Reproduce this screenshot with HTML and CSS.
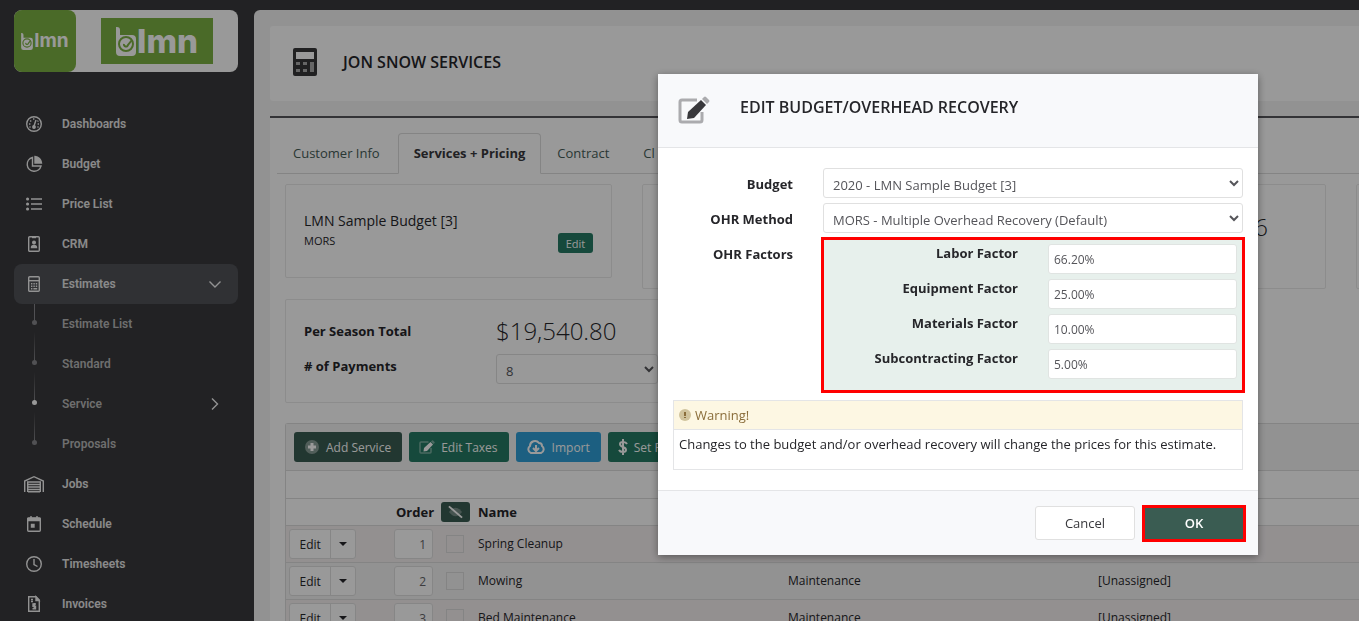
FILE: index.html
```html
<!DOCTYPE html>
<html lang="en">
<head>
  <meta charset="UTF-8">
  <meta name="viewport" content="width=device-width, initial-scale=1.0">
  <title>Jon Snow Services - LMN</title>
  <link rel="stylesheet" href="styles.css">
</head>
<body>

  <svg class="defs" aria-hidden="true">
    <symbol id="logo-mark" viewBox="0 0 20 29">
      <path d="M0 0h1q3 0 3 3v5h12a4 4 0 0 1 4 4v13a4 4 0 0 1-4 4H4a4 4 0 0 1-4-4Z" fill="#fff"/>
      <circle cx="10" cy="17" r="7" fill="none" stroke="#7cb143" stroke-width="2"/>
      <path d="M8 17a2 2 0 1 0 4 1l4-5" fill="none" stroke="#7cb143" stroke-width="2"/>
    </symbol>
    <symbol id="pencil-square" viewBox="0 0 32 28">
      <path d="M19 4H4a2 2 0 0 0-2 2v18a2 2 0 0 0 2 2h18a2 2 0 0 0 2-2v-8" fill="none" stroke="currentColor" stroke-width="3" opacity=".4"/>
      <path d="m10 16-1 7 7-1L28 9l-5-5Z" fill="currentColor"/>
      <path d="m24 3 2-2q1-1 2 0l3 3q1 1 0 2l-2 2Z" fill="currentColor" opacity=".4"/>
    </symbol>
  </svg>

  <div class="app">
    <aside class="sidebar">
      <div class="brand">
        <div class="brand-small">
          <svg><use href="#logo-mark"/></svg><span>lmn</span>
        </div>
        <div class="brand-large">
          <svg><use href="#logo-mark"/></svg><span>lmn</span>
        </div>
      </div>

      <nav class="menu">
        <a href="#"><svg class="icon" viewBox="0 0 20 20"><circle cx="10" cy="10" r="7.3"/><path d="m10 12 2-6"/><circle class="solid" cx="10" cy="13" r="1.2"/><path d="M5 10h1.4M6.2 6.5l1 1M9 5h1.4M13.6 10H15M13.5 7.5l.8-.8M5.4 13h1.2M13.4 13h1.2"/></svg>Dashboards</a>
        <a href="#"><svg class="icon" viewBox="0 0 20 20"><path d="M8.500 3.500a7 7 0 1 0 8.500 8.500h-8.500Z"/><path class="solid" d="M11 2.500a7 7 0 0 1 6.500 6.500H11Z"/></svg>Budget</a>
        <a href="#"><svg class="icon" viewBox="0 0 20 20"><path d="M7 5h11M7 10h11M7 15h11"/><path class="dots" d="M3.500 5h.1M3.500 10h.1M3.500 15h.1"/></svg>Price List</a>
        <a href="#"><svg class="icon" viewBox="0 0 20 20"><rect x="4.700" y="2.700" width="10.600" height="14.600" rx="1"/><path d="M8 3.500h4"/><circle class="solid" cx="10" cy="8.500" r="1.300"/><path class="solid" d="M7.500 13.500q0-2 2.500-2t2.500 2Z"/></svg>CRM</a>
        <a href="#" class="active"><svg class="icon" viewBox="0 0 20 20"><rect x="4.700" y="2.700" width="10.600" height="14.600" rx="1"/><path d="M5 6.700h10"/><path d="M7 9.700h1.400M9.400 9.700h1.400M11.800 9.700h1.400M7 12.200h1.400M9.400 12.200h1.400M11.800 12.200h1.400M7 14.700h1.400M9.400 14.700h3.800"/></svg>Estimates<svg class="caret" viewBox="0 0 14 14"><path d="m1.500 4.500 5.500 5.500 5.500-5.500"/></svg></a>
        <a href="#" class="sub first">Estimate List</a>
        <a href="#" class="sub">Standard</a>
        <a href="#" class="sub current">Service<svg class="caret" viewBox="0 0 14 14"><path d="m4 1.500 5.500 5.500-5.500 5.500"/></svg></a>
        <a href="#" class="sub">Proposals</a>
        <a href="#"><svg class="icon" viewBox="0 0 20 20"><path d="M.7 18V7L10 2.700 19.300 7v11"/><path d="M3.700 18V8h12.600v10M4 10.500h12M4 13h12M4 15.500h12M4 17.700h12"/></svg>Jobs</a>
        <a href="#"><svg class="icon" viewBox="0 0 20 20"><rect x="3.700" y="4" width="12.600" height="13.300" rx="1"/><path class="solid" d="M4 4.500h12v2H4ZM7.500 10.500h2.500V13H7.500Z"/><path d="M7 2v2M13 2v2"/></svg>Schedule</a>
        <a href="#"><svg class="icon" viewBox="0 0 20 20"><circle cx="10" cy="10" r="7.300"/><path d="M10 5v5.500l3.500 2"/></svg>Timesheets</a>
        <a href="#"><svg class="icon" viewBox="0 0 20 20"><path d="M4.700 2.700H12l3.300 3.300v11.300H4.700Z"/><path class="solid" d="M12 3v3.500h3Z"/><path d="M7 5.500h2M7 7.500h2M12 10H9v2.300h2.500v2.400H8.500M10.300 9v6.500"/></svg>Invoices</a>
      </nav>
    </aside>

    <main class="content">
      <header class="page-head">
        <svg viewBox="0 0 26 30"><rect x="1" y="1" width="24" height="28" rx="2" fill="#38383a"/><path d="M4 5h18v7H4Z" fill="#fff"/><path d="M4 15h4v3H4ZM11 15h4v3h-4ZM18 15h4v10h-4ZM4 22h4v3H4ZM11 22h4v3h-4Z" fill="#aaa"/></svg>
        <h1>JON SNOW SERVICES</h1>
      </header>

      <section class="panel">
        <nav class="tabs">
          <a href="#">Customer Info</a>
          <a href="#" class="active">Services + Pricing</a>
          <a href="#">Contract</a>
          <a href="#">Cl</a>
        </nav>

        <div class="cards">
          <div class="card budget">
            <div>
              <h2>LMN Sample Budget [3]</h2>
              <p>MORS</p>
            </div>
            <button class="btn-small">Edit</button>
          </div>
          <div class="card"></div>
          <div class="card amount">6</div>
          <div class="card"></div>
        </div>

        <div class="card season">
          <span class="season-label">Per Season Total</span>
          <span class="total">$19,540.80</span>
          <label class="season-label" for="payments"># of Payments</label>
          <select id="payments"><option>8</option></select>
        </div>

        <div class="services">
          <div class="toolbar">
            <button class="btn dark"><svg viewBox="0 0 16 16"><circle cx="8" cy="8" r="7" fill="#fff" opacity=".4"/><path d="M8 4v8M4 8h8" stroke="#fff" stroke-width="3"/></svg>Add Service</button>
            <button class="btn green"><svg viewBox="0 0 32 28"><use href="#pencil-square"/></svg>Edit Taxes</button>
            <button class="btn blue"><svg class="wide" viewBox="0 0 20 16"><path d="M5 14a4 4 0 0 1-1-7 5 5 0 0 1 9-3q3 0 3 3a4 4 0 0 1-1 7ZM10 6v5M7 9l3 3 3-3" fill="none" stroke="#fff" stroke-width="2"/></svg>Import</button>
            <button class="btn green"><svg class="narrow" viewBox="0 0 10 16"><path d="M9 5q-1-2-4-2T2 5t3 3 3 3-3 2-4-2M5 0v16" fill="none" stroke="#fff" stroke-width="2"/></svg>Set P</button>
          </div>
          <table>
            <colgroup>
              <col class="col-edit">
              <col class="col-order">
              <col class="col-check">
              <col class="col-name">
              <col class="col-name">
              <col>
            </colgroup>
            <thead>
              <tr class="spacer"><td colspan="6"></td></tr>
              <tr>
                <th></th>
                <th class="order-head">Order</th>
                <th><button class="eye" aria-label="Hide"><svg viewBox="0 0 16 14"><path d="M1 7q7-9 14 0-7 9-14 0Z" fill="#fff" opacity=".3"/><path d="m1 1 14 12" stroke="#fff" stroke-width="2"/></svg></button></th>
                <th>Name</th>
                <th></th>
                <th></th>
              </tr>
            </thead>
            <tbody>
              <tr>
                <td><div class="split"><button>Edit</button><button class="drop" aria-label="More"></button></div></td>
                <td class="order"><input type="text" value="1" aria-label="Order"></td>
                <td class="check"><input type="checkbox" aria-label="Hide Spring Cleanup"></td>
                <td>Spring Cleanup</td>
                <td></td>
                <td></td>
              </tr>
              <tr>
                <td><div class="split"><button>Edit</button><button class="drop" aria-label="More"></button></div></td>
                <td class="order"><input type="text" value="2" aria-label="Order"></td>
                <td class="check"><input type="checkbox" aria-label="Hide Mowing"></td>
                <td>Mowing</td>
                <td>Maintenance</td>
                <td>[Unassigned]</td>
              </tr>
              <tr>
                <td><div class="split"><button>Edit</button><button class="drop" aria-label="More"></button></div></td>
                <td class="order"><input type="text" value="3" aria-label="Order"></td>
                <td class="check"><input type="checkbox" aria-label="Hide Bed Maintenance"></td>
                <td>Bed Maintenance</td>
                <td>Maintenance</td>
                <td>[Unassigned]</td>
              </tr>
            </tbody>
          </table>
        </div>
      </section>
    </main>
  </div>

  <div class="overlay">
    <form class="modal" role="dialog" aria-labelledby="modal-title">
      <header class="modal-head">
        <svg><use href="#pencil-square"/></svg>
        <h2 id="modal-title">EDIT BUDGET/OVERHEAD RECOVERY</h2>
      </header>
      <div class="modal-body">
        <div class="field">
          <label for="budget">Budget</label>
          <select id="budget"><option>2020 - LMN Sample Budget [3]</option></select>
        </div>
        <div class="field">
          <label for="method">OHR Method</label>
          <select id="method"><option>MORS - Multiple Overhead Recovery (Default)</option></select>
        </div>
        <div class="field">
          <span class="field-label">OHR Factors</span>
          <div class="factors">
            <label for="labor">Labor Factor</label>
            <input type="text" id="labor" value="66.20%">
            <label for="equipment">Equipment Factor</label>
            <input type="text" id="equipment" value="25.00%">
            <label for="materials">Materials Factor</label>
            <input type="text" id="materials" value="10.00%">
            <label for="subcontracting">Subcontracting Factor</label>
            <input type="text" id="subcontracting" value="5.00%">
          </div>
        </div>
        <div class="warning">
          <h3><svg viewBox="0 0 12 12"><circle cx="6" cy="6" r="6" fill="#d0c39d"/><path d="M6 3v4M6 8v1" stroke="#8a6d3b" stroke-width="2"/></svg>Warning!</h3>
          <p>Changes to the budget and/or overhead recovery will change the prices for this estimate.</p>
        </div>
      </div>
      <footer class="modal-foot">
        <button type="button" class="cancel">Cancel</button>
        <button type="button" class="ok">OK</button>
      </footer>
    </form>
  </div>

</body>
</html>
```

FILE: styles.css
```css
* { box-sizing: border-box; }

body {
  margin: 0;
  height: 100vh;
  overflow: hidden;
  font-family: "Open Sans", sans-serif;
  font-size: 13px;
  line-height: 20px;
  color: #26262a;
  background: #3a3a3d;
}

h1, h2, h3, p { margin: 0; }

a { text-decoration: none; }

button, input, select {
  font-family: inherit;
  font-size: 13px;
}

.defs {
  position: absolute;
  width: 0;
  height: 0;
}

.app {
  display: flex;
  height: 100vh;
  overflow: hidden;
}

/* Sidebar */

.sidebar {
  flex: 0 0 254px;
  padding: 10px 16px 0 14px;
}

.brand {
  display: flex;
  height: 62px;
  margin-bottom: 32px;
  background: #fff;
  border-radius: 8px;
}

.brand-small, .brand-large {
  display: flex;
  align-items: center;
  justify-content: center;
  gap: 1px;
  background: #7cb143;
  color: #fff;
  font-family: Inter, sans-serif;
  font-weight: 700;
}

.brand-small {
  width: 62px;
  border-radius: 8px;
  font-size: 19px;
}

.brand-small svg {
  width: 12px;
  height: 17px;
}

.brand-large {
  width: 112px;
  height: 46px;
  margin: 8px 25px;
  font-size: 33px;
  font-weight: 800;
}

.brand-large svg {
  width: 20px;
  height: 29px;
}

.menu a {
  position: relative;
  display: flex;
  align-items: center;
  height: 40px;
  padding: 0 16px 0 10px;
  border-radius: 8px;
  color: #e6e6e6;
  font-family: Roboto, sans-serif;
  font-size: 12px;
  font-weight: 600;
}

.menu a.active { background: #505258; }

.icon {
  width: 20px;
  height: 20px;
  margin-right: 18px;
}

.icon, .caret {
  flex: none;
  fill: none;
  stroke: #f4f4f4;
  stroke-width: 1.4;
  overflow: visible;
}

.icon .solid { fill: #f4f4f4; }

.icon .dots {
  stroke-width: 3;
  stroke-linecap: round;
}

.caret {
  width: 14px;
  height: 14px;
  margin-left: auto;
}

.menu a.sub {
  padding-left: 48px;
  color: #b8b8b8;
}

.sub::before {
  content: "";
  position: absolute;
  left: 20px;
  top: -12px;
  width: 1px;
  height: 30px;
  background: linear-gradient(transparent, #88888c);
}

.sub.first::before {
  top: 0;
  height: 18px;
  background: #88888c;
}

.sub::after {
  content: "";
  position: absolute;
  left: 18px;
  top: 16px;
  width: 5px;
  height: 5px;
  border-radius: 50%;
  background: #88888c;
}

.sub.current::after { background: #fff; }

/* Page */

.content {
  flex: 1;
  min-width: 0;
  margin-top: 10px;
  padding: 16px 0 0 16px;
  overflow: hidden;
  background: #f4f4f4;
  border-top-left-radius: 6px;
}

.page-head {
  display: flex;
  align-items: center;
  gap: 25px;
  height: 75px;
  margin-bottom: 15px;
  padding: 0 22px 3px;
  background: #fff;
  border-radius: 3px 0 0 3px;
}

.page-head svg {
  width: 26px;
  height: 30px;
}

.page-head h1 {
  font-size: 16px;
  font-weight: 600;
}

.panel {
  height: 600px;
  padding: 15px 0 0 15px;
  background: #fff;
  border-top: 2px solid #55555a;
}

.tabs {
  display: flex;
  height: 41px;
  margin: 0 0 10px -8px;
  border-bottom: 1px solid #dcdcdc;
}

.tabs a {
  height: 41px;
  padding: 10px 18px 0 16px;
  color: #465c58;
}

.tabs a.active {
  padding: 9px 15px 0;
  border: 1px solid #dcdcdc;
  border-bottom-color: #fff;
  border-radius: 4px 4px 0 0;
  color: #38383c;
  font-weight: 700;
}

.cards {
  display: grid;
  grid-template-columns: repeat(4, 327px);
  column-gap: 30px;
  align-items: start;
  margin-bottom: 10px;
}

.card {
  height: 105px;
  border: 1px solid #eaeaea;
  border-radius: 2px;
}

.card.budget {
  display: flex;
  align-items: center;
  justify-content: space-between;
  height: 94px;
  padding: 0 18px;
}

.card.budget h2 {
  font-size: 14px;
  font-weight: 500;
}

.card.budget p { font-size: 11px; }

.btn-small {
  align-self: flex-end;
  width: 35px;
  height: 20px;
  margin-bottom: 24px;
  padding: 0;
  border: 0;
  border-radius: 3px;
  background: #267b64;
  color: #fff;
  font-size: 11px;
}

.card.amount {
  padding: 30px 57px;
  text-align: right;
}

.amount, .total {
  font-size: 24px;
  font-weight: 300;
}

.amount { line-height: 24px; }

.card.season {
  display: grid;
  grid-template-columns: 192px 162px;
  grid-template-rows: 30px 30px;
  row-gap: 8px;
  width: 684px;
  height: 104px;
  margin-bottom: 20px;
  padding: 16px 18px;
}

.season-label {
  padding-top: 5px;
  font-weight: 700;
}

label.season-label { padding-top: 2px; }

.total { line-height: 30px; }

select {
  height: 30px;
  padding: 4px 5px 0;
  border: 1px solid #e0e0e0;
  border-radius: 3px;
  background: #fff;
  color: #55555a;
}

.services {
  border: 1px solid #dcdcdc;
  border-right: 0;
  border-radius: 3px 0 0 0;
}

.toolbar {
  display: flex;
  gap: 7px;
  height: 46px;
  padding: 8px;
  background: #f4f4f4;
}

.btn {
  display: flex;
  align-items: center;
  gap: 6px;
  height: 30px;
  padding: 0 11px 0 10px;
  border: 0;
  border-radius: 3px;
  color: #fff;
  font-size: 12px;
  white-space: nowrap;
}

.btn svg {
  width: 16px;
  height: 16px;
}

.btn .wide { width: 20px; }
.btn .narrow { width: 10px; }

.btn.dark { background: #3a5c52; }
.btn.green { background: #267b64; }
.btn.blue { background: #2f9fd8; }

table {
  width: 100%;
  table-layout: fixed;
  border-collapse: collapse;
}

th, td {
  height: 37px;
  padding: 0;
  border-top: 1px solid #dcdcdc;
  text-align: left;
}

td { font-size: 12px; }
th { height: 27px; }
.spacer td { height: 28px; }

.col-edit { width: 108px; }
.col-order { width: 47px; }
.col-check { width: 37px; }
.col-name { width: 310px; }

th.order-head { padding-left: 2px; }

tbody tr:nth-child(odd) { background: #f5f0f1; }
tbody tr:nth-child(even) { background: #f4f4f4; }

.eye {
  display: block;
  width: 29px;
  height: 20px;
  padding: 3px 7px;
  border: 0;
  border-radius: 3px;
  background: #3a5c52;
}

.eye svg {
  display: block;
  width: 15px;
  height: 14px;
}

.split {
  display: flex;
  width: 67px;
  margin-left: 3px;
  border: 1px solid #e0e0e0;
  border-radius: 3px;
  background: #fff;
}

.split button {
  width: 41px;
  height: 28px;
  padding: 0;
  border: 0;
  background: none;
  color: #26262a;
  font-size: 12px;
}

.split .drop {
  display: flex;
  align-items: center;
  justify-content: center;
  width: 25px;
  border-left: 1px solid #e0e0e0;
}

.drop::after {
  content: "";
  border: 4px solid transparent;
  border-top-color: #26262a;
  border-bottom: 0;
}

.order input {
  display: block;
  width: 39px;
  height: 30px;
  padding: 0 6px;
  border: 1px solid #e0e0e0;
  border-radius: 3px;
  color: #66666a;
  font-size: 12px;
  text-align: right;
}

.check input {
  appearance: none;
  display: block;
  width: 18px;
  height: 18px;
  margin: 0 0 0 5px;
  border: 1px solid #dcdcdc;
}

/* Modal */

.overlay {
  position: fixed;
  inset: 0;
  display: flex;
  align-items: flex-start;
  justify-content: flex-end;
  padding: 74px 101px 0 0;
  background: rgba(0, 0, 0, 0.4);
}

.modal {
  width: 600px;
  background: #fff;
  box-shadow: 0 2px 8px rgba(0, 0, 0, 0.4);
}

.modal-head {
  display: flex;
  gap: 30px;
  height: 74px;
  padding: 22px 20px 0;
  background: #f8f9fb;
  border-bottom: 1px solid #e4e5e7;
}

.modal-head svg {
  width: 32px;
  height: 28px;
  color: #38383c;
}

.modal-head h2 {
  font-size: 16px;
  font-weight: 600;
  line-height: 22px;
}

.modal-body { padding: 20px 15px; }

.field {
  display: grid;
  grid-template-columns: 120px 1fr;
  column-gap: 30px;
  margin-bottom: 5px;
}

.field label, .field-label {
  padding-top: 6px;
  font-weight: 700;
  text-align: right;
}

.factors {
  display: grid;
  grid-template-columns: 194px 1fr;
  column-gap: 30px;
  row-gap: 5px;
  margin: 2px 1px 0;
  padding: 4px 5px 11px 0;
  background: #e7f0ec;
  outline: 3px solid #f00;
}

.field .factors label {
  padding-top: 0;
  line-height: 18px;
}

.factors input {
  width: 100%;
  height: 30px;
  padding: 0 5px;
  border: 1px solid #e0e4e2;
  border-radius: 3px;
  color: #55555a;
  font-size: 12px;
}

.warning {
  margin-top: 10px;
  border: 1px solid #e4e5e7;
}

.warning h3 {
  display: flex;
  align-items: center;
  gap: 4px;
  height: 29px;
  padding: 0 5px;
  border-bottom: 1px solid #e4e5e7;
  background: #fdf7e3;
  color: #8a6d3b;
  font-size: 13px;
  font-weight: 400;
}

.warning svg {
  width: 12px;
  height: 12px;
}

.warning p {
  padding: 4px 5px 15px;
  white-space: nowrap;
}

.modal-foot {
  display: flex;
  align-items: center;
  justify-content: flex-end;
  gap: 7px;
  height: 65px;
  padding-right: 12px;
  background: #f8f9fb;
  border-top: 1px solid #e4e5e7;
}

.cancel {
  width: 100px;
  height: 34px;
  border: 1px solid #e0e0e0;
  border-radius: 3px;
  background: #fff;
  color: #38383c;
}

.ok {
  width: 104px;
  height: 37px;
  border: 3px solid #f00;
  background: #3a5c52;
  color: #fff;
  font-weight: 600;
}
```
